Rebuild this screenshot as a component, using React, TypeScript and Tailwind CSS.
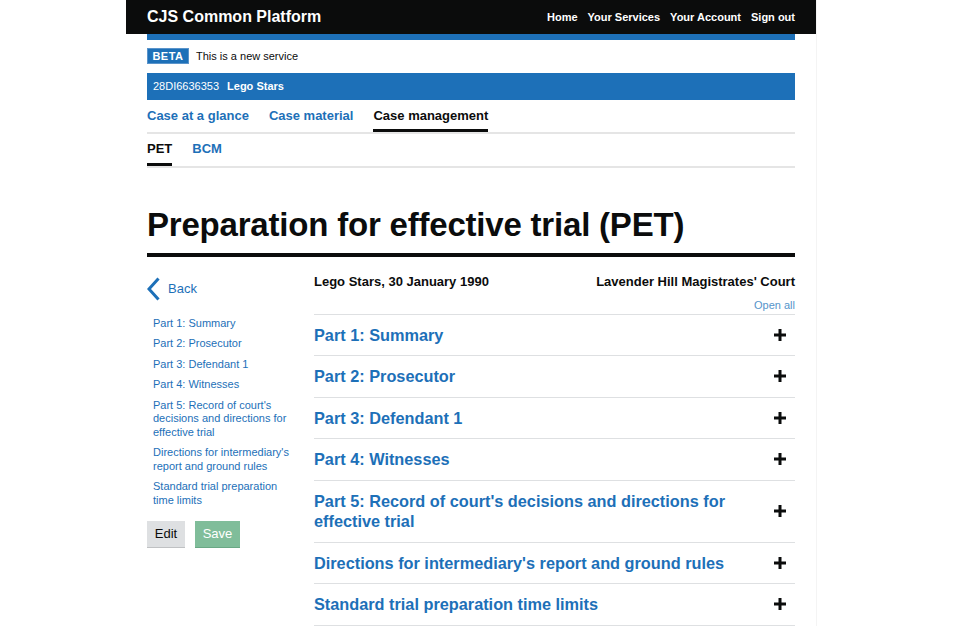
import type { ReactNode } from 'react';

const sections = [
  'Part 1: Summary',
  'Part 2: Prosecutor',
  'Part 3: Defendant 1',
  'Part 4: Witnesses',
  "Part 5: Record of court's decisions and directions for effective trial",
  "Directions for intermediary's report and ground rules",
  'Standard trial preparation time limits',
];

const navLinks = ['Home', 'Your Services', 'Your Account', 'Sign out'];

function PlusIcon() {
  return (
    <svg width="12" height="12" viewBox="0 0 12 12" className="shrink-0">
      <rect x="4.5" y="0" width="3" height="12" fill="#0b0c0c" />
      <rect x="0" y="4.5" width="12" height="3" fill="#0b0c0c" />
    </svg>
  );
}

function Tab({ active, children }: { active?: boolean; children: ReactNode }) {
  return (
    <div
      className={
        active
          ? 'border-b-[3px] border-[#0b0c0c] pb-[4px] text-[#0b0c0c]'
          : 'border-b-[3px] border-transparent pb-[4px] text-[#1d70b8]'
      }
    >
      {children}
    </div>
  );
}

export default function App() {
  return (
    <div className="min-h-screen bg-white font-['Liberation_Sans',Arial,sans-serif]">
      <div className="ml-[126px] w-[691px] border-r border-[#f4f4f4]">
        {/* header */}
        <header className="flex h-[34px] items-center justify-between bg-[#0b0c0c] px-[21px]">
          <span className="text-[16px] font-bold text-white">
            CJS Common Platform
          </span>
          <nav className="flex gap-[10px] text-[11px] font-bold text-white">
            {navLinks.map((link) => (
              <span key={link}>{link}</span>
            ))}
          </nav>
        </header>

        <div className="px-[21px]">
          <div className="h-[6px] bg-[#1d70b8]" />

          <div className="mt-[8px] flex items-center gap-[7px]">
            <span className="flex h-[16px] w-[42px] items-center justify-center border border-[#5a94cb] bg-[#1d70b8] text-[11px] font-bold tracking-[0.5px] text-white">
              BETA
            </span>
            <span className="text-[11px] text-[#0b0c0c]">
              This is a new service
            </span>
          </div>

          <div className="mt-[8px] flex h-[27px] items-center gap-[8px] bg-[#1d70b8] px-[6px] text-[11px] text-white">
            <span>28DI6636353</span>
            <span className="font-bold">Lego Stars</span>
          </div>

          {/* tabs */}
          <div className="mt-[6px] flex gap-[20px] border-b-2 border-[#e5e5e5] text-[13px] font-bold">
            <Tab>Case at a glance</Tab>
            <Tab>Case material</Tab>
            <Tab active>Case management</Tab>
          </div>
          <div className="mt-[5px] flex gap-[20px] border-b-2 border-[#e5e5e5] text-[13px] font-bold">
            <Tab active>PET</Tab>
            <Tab>BCM</Tab>
          </div>

          <h1 className="mt-[37px] text-[33px] font-bold leading-[40px] tracking-[-0.2px] text-[#0b0c0c]">
            Preparation for effective trial (PET)
          </h1>
          <div className="mt-[8px] h-[4px] bg-[#0b0c0c]" />

          {/* body */}
          <div className="mt-[15px] flex gap-[24px]">
            <aside className="w-[143px] shrink-0">
              <div className="mt-[5px] flex items-center gap-[8px] text-[13px] text-[#1d70b8]">
                <svg width="13" height="24" viewBox="0 0 13 24">
                  <path
                    d="M11.5 1.5 L2 12 L11.5 22.5"
                    fill="none"
                    stroke="#1d70b8"
                    strokeWidth="3"
                  />
                </svg>
                <span>Back</span>
              </div>
              <ul className="mt-[16px] flex flex-col gap-[7px] pl-[6px] text-[11px] leading-[13.5px] text-[#1d70b8]">
                {sections.map((s) => (
                  <li key={s}>{s}</li>
                ))}
              </ul>
              <div className="mt-[14px] flex gap-[10px] text-[13px]">
                <button className="h-[26px] w-[38px] bg-[#dee0e2] text-[#0b0c0c] shadow-[0_1px_0_#bfc1c3]">
                  Edit
                </button>
                <button className="h-[26px] w-[45px] bg-[#80bd9a] text-white shadow-[0_1px_0_#6aa885]">
                  Save
                </button>
              </div>
            </aside>

            <main className="flex-1">
              <div className="flex justify-between text-[13px] font-bold text-[#0b0c0c]">
                <span>Lego Stars, 30 January 1990</span>
                <span>Lavender Hill Magistrates' Court</span>
              </div>
              <div className="mt-[8px] text-right text-[11px] leading-[13px] text-[#5694ca]">
                Open all
              </div>
              <div className="mt-[1.5px] border-t border-[#dee0e2]">
                {sections.map((s) => (
                  <div
                    key={s}
                    className="flex items-center justify-between border-b border-[#dee0e2] py-[10px] pr-[9px]"
                  >
                    <span className="max-w-[430px] text-[16.3px] font-bold leading-[20.5px] text-[#1d70b8]">
                      {s}
                    </span>
                    <PlusIcon />
                  </div>
                ))}
              </div>
            </main>
          </div>
        </div>
      </div>
    </div>
  );
}
